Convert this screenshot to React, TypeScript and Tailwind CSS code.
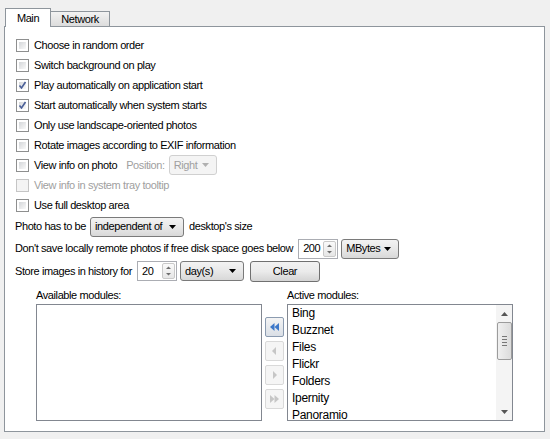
import React from "react";

const font = { fontFamily: '"Liberation Sans", Arial, sans-serif' };

type CheckProps = { label: string; checked?: boolean; disabled?: boolean; children?: React.ReactNode };

const CheckRow = ({ label, checked, disabled, children }: CheckProps) => (
  <div className="flex h-[20px] items-center">
    <span
      className={`relative flex h-[13px] w-[13px] items-center justify-center border ${
        disabled ? "border-[#c5c5c5] bg-[#f4f4f4]" : "border-[#8e8f8f] bg-white"
      }`}
    >
      {!disabled && (
        <span className="absolute inset-[2px] bg-gradient-to-br from-[#d4d6d9] to-[#f9f9f9]" />
      )}
      {checked && (
        <svg className="relative" width="9" height="9" viewBox="0 0 9 9">
          <path d="M1.5 4.5 L3.5 7 L7.5 1" fill="none" stroke="#4a5f97" strokeWidth="1.6" />
        </svg>
      )}
    </span>
    <span className={`ml-[5px] ${disabled ? "text-[#a0a0a0]" : "text-black"}`}>{label}</span>
    {children}
  </div>
);

const Caret = ({ color = "#000" }: { color?: string }) => (
  <svg width="7" height="4" viewBox="0 0 7 4">
    <path d="M0 0 H7 L3.5 4 Z" fill={color} />
  </svg>
);

const Combo = ({ text, width, disabled }: { text: string; width: string; disabled?: boolean }) => (
  <div
    className={`flex h-[20px] items-center justify-between rounded-[3px] border pl-[4px] pr-[7px] ${width} ${
      disabled
        ? "border-[#d0d0d0] bg-[#f4f4f4] text-[#a0a0a0]"
        : "border-[#7a7a7a] bg-gradient-to-b from-[#f3f3f3] via-[#e8e8e8] to-[#d8d8d8] text-black"
    }`}
  >
    <span>{text}</span>
    <Caret color={disabled ? "#b0b0b0" : "#000"} />
  </div>
);

const Spin = ({ value, width }: { value: string; width: string }) => (
  <div className={`flex h-[20px] items-center border border-[#abadb3] bg-white ${width}`}>
    <span className="flex-1 pl-[4px]">{value}</span>
    <div className="mr-[1px] flex h-[16px] w-[13px] flex-col justify-between rounded-[2px] border border-[#c9c9c9] bg-gradient-to-b from-[#fafafa] to-[#e6e6e6]">
      <svg width="11" height="7" viewBox="0 0 11 7">
        <path d="M3 5 H8 L5.5 2.5 Z" fill="#6d6d6d" />
      </svg>
      <svg width="11" height="7" viewBox="0 0 11 7">
        <path d="M3 2 H8 L5.5 4.5 Z" fill="#6d6d6d" />
      </svg>
    </div>
  </div>
);

const ArrowBtn = ({ kind, active }: { kind: "ll" | "l" | "r" | "rr"; active?: boolean }) => {
  const c = active ? "#3d78c9" : "#c6c6c6";
  return (
    <div
      className={`flex h-[20px] w-[19px] items-center justify-center rounded-[2px] border ${
        active ? "border-[#8b9bb0] bg-gradient-to-b from-[#f4f4f4] to-[#dadfe6]" : "border-[#d9d9d9] bg-[#f5f5f5]"
      }`}
    >
      <svg width="11" height="10" viewBox="0 0 11 10">
        {kind === "ll" && (
          <>
            <path d="M5.5 1 V9 L1 5 Z" fill={c} />
            <path d="M10 1 V9 L5.5 5 Z" fill={c} />
          </>
        )}
        {kind === "l" && <path d="M7 1 V9 L3 5 Z" fill={c} />}
        {kind === "r" && <path d="M4 1 V9 L8 5 Z" fill={c} />}
        {kind === "rr" && (
          <>
            <path d="M1 1 V9 L5.5 5 Z" fill={c} />
            <path d="M5.5 1 V9 L10 5 Z" fill={c} />
          </>
        )}
      </svg>
    </div>
  );
};

const modules = ["Bing", "Buzznet", "Files", "Flickr", "Folders", "Ipernity", "Panoramio"];

export default function App() {
  return (
    <div
      className="h-[439px] w-[550px] overflow-hidden bg-[#f0f0f0] text-[11px] tracking-[-0.4px] text-black"
      style={font}
    >
      {/* tabs */}
      <div className="flex items-end pl-[5px] pt-[8px]">
        <div className="relative z-10 -mb-px flex h-[19px] w-[46px] items-center justify-center border border-b-0 border-[#8e959c] bg-white">
          Main
        </div>
        <div className="flex h-[15px] w-[59px] items-center justify-center border border-b-0 border-l-0 border-[#8e959c] bg-gradient-to-b from-[#f2f2f2] to-[#dcdcdc]">
          Network
        </div>
      </div>

      {/* panel */}
      <div className="ml-[4px] h-[406px] w-[541px] border border-[#8e959c] bg-white pl-[11px] pt-[8px]">
        <CheckRow label="Choose in random order" />
        <CheckRow label="Switch background on play" />
        <CheckRow label="Play automatically on application start" checked />
        <CheckRow label="Start automatically when system starts" checked />
        <CheckRow label="Only use landscape-oriented photos" />
        <CheckRow label="Rotate images according to EXIF information" />
        <CheckRow label="View info on photo">
          <span className="ml-[9px] text-[#a0a0a0]">Position:</span>
          <div className="ml-[4px]">
            <Combo text="Right" width="w-[48px]" disabled />
          </div>
        </CheckRow>
        <CheckRow label="View info in system tray tooltip" disabled />
        <CheckRow label="Use full desktop area" />

        <div className="-ml-[1px] mt-[1px] flex h-[21px] items-center">
          <span>Photo has to be</span>
          <div className="ml-[4px]">
            <Combo text="independent of" width="w-[94px]" />
          </div>
          <span className="ml-[5px]">desktop's size</span>
        </div>

        <div className="-ml-[1px] mt-[1px] flex h-[21px] items-center">
          <span>Don't save locally remote photos if free disk space goes below</span>
          <div className="ml-[5px]">
            <Spin value="200" width="w-[40px]" />
          </div>
          <div className="ml-[3px]">
            <Combo text="MBytes" width="w-[58px]" />
          </div>
        </div>

        <div className="-ml-[1px] mt-[1px] flex h-[22px] items-center">
          <span>Store images in history for</span>
          <div className="ml-[5px]">
            <Spin value="20" width="w-[40px]" />
          </div>
          <div className="ml-[3px]">
            <Combo text="day(s)" width="w-[64px]" />
          </div>
          <div className="ml-[6px] flex h-[21px] w-[70px] items-center justify-center rounded-[3px] border border-[#707070] bg-gradient-to-b from-[#f2f2f2] via-[#ebebeb] to-[#d4d4d4]">
            Clear
          </div>
        </div>

        {/* modules */}
        <div className="ml-[20px] mt-[6px] flex">
          <div className="flex flex-col">
            <span className="h-[16px] leading-[14px]">Available modules:</span>
            <div className="h-[117px] w-[226px] border border-[#828790] bg-white" />
          </div>
          <div className="mx-[3px] mt-[29px] flex flex-col gap-[4px]">
            <ArrowBtn kind="ll" active />
            <ArrowBtn kind="l" />
            <ArrowBtn kind="r" />
            <ArrowBtn kind="rr" />
          </div>
          <div className="flex flex-col">
            <span className="h-[16px] leading-[14px]">Active modules:</span>
            <div className="flex h-[117px] w-[226px] border border-[#828790] bg-white">
              <div className="flex-1 overflow-hidden pl-[4px] text-[12px] tracking-[-0.3px]">
                {modules.map((m) => (
                  <div key={m} className="h-[17px] leading-[17px]">
                    {m}
                  </div>
                ))}
              </div>
              <div className="flex w-[16px] flex-col items-center bg-[#f4f4f4]">
                <div className="flex h-[17px] items-center">
                  <svg width="7" height="4" viewBox="0 0 7 4">
                    <path d="M0 4 H7 L3.5 0 Z" fill="#555" />
                  </svg>
                </div>
                <div className="flex h-[38px] w-[15px] flex-col items-center justify-center gap-[2px] rounded-[2px] border border-[#9c9c9c] bg-gradient-to-r from-[#f0f0f0] to-[#dcdcdc]">
                  <span className="h-px w-[5px] bg-[#777]" />
                  <span className="h-px w-[5px] bg-[#777]" />
                  <span className="h-px w-[5px] bg-[#777]" />
                  <span className="h-px w-[5px] bg-[#777]" />
                </div>
                <div className="flex-1" />
                <div className="flex h-[17px] items-center">
                  <Caret color="#555" />
                </div>
              </div>
            </div>
          </div>
        </div>
      </div>
    </div>
  );
}
